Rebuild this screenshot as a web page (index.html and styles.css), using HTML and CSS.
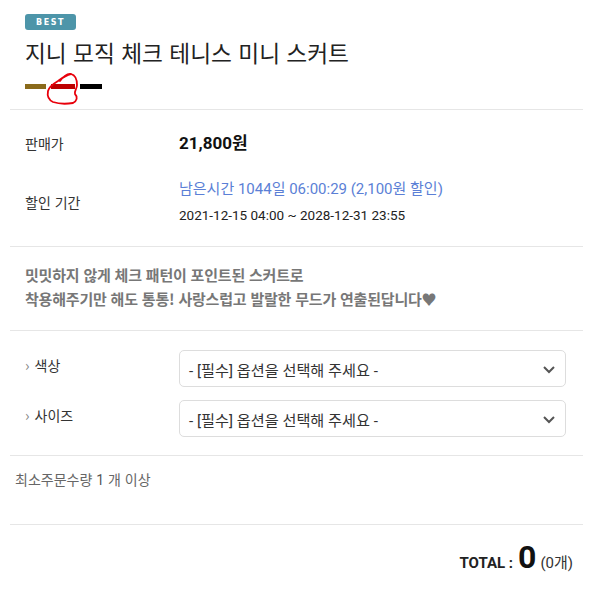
FILE: index.html
```html
<!DOCTYPE html>
<html lang="ko">
<head>
<meta charset="utf-8">
<link rel="stylesheet" href="styles.css">
</head>
<body>
<div class="page">
  <section class="head">
    <span class="badge">BEST</span>
    <h1 class="title">지니 모직 체크 테니스 미니 스커트</h1>
    <div class="swatches">
      <span class="sw gold"></span>
      <span class="sw red"></span>
      <span class="sw black"></span>
      <svg class="mark" width="50" height="44" viewBox="0 0 50 44">
        <path d="M20 13 C23 9 27 5 31 6 C35 7 37 11 37 17 C37 21 34 23 35 26 C38 29 37 33 33 35 C27 36 19 36 13 34 C9 32 7 28 8 23 C9 19 13 16 18 13 C22 10 26 7 31 6" fill="none" stroke="#e8000b" stroke-width="1.8" stroke-linecap="round"/>
      </svg>
    </div>
  </section>

  <section class="price">
    <div class="row">
      <div class="label">판매가</div>
      <div class="value strong">21,800원</div>
    </div>
    <div class="row mid">
      <div class="label">할인 기간</div>
      <div class="value">
        <div class="remain">남은시간 1044일 06:00:29 (2,100원 할인)</div>
        <div class="period">2021-12-15 04:00 ~ 2028-12-31 23:55</div>
      </div>
    </div>
  </section>

  <section class="desc">
    <p>밋밋하지 않게 체크 패턴이 포인트된 스커트로</p>
    <p>착용해주기만 해도 통통! 사랑스럽고 발랄한 무드가 연출된답니다♥</p>
  </section>

  <section class="opts">
    <div class="opt">
      <div class="olabel"><span class="gt">›</span>색상</div>
      <div class="select">
        <span>- [필수] 옵션을 선택해 주세요 -</span>
        <svg width="14" height="10" viewBox="0 0 14 10"><path d="M2 3 L7 8 L12 3" fill="none" stroke="#555" stroke-width="2"/></svg>
      </div>
    </div>
    <div class="opt">
      <div class="olabel"><span class="gt">›</span>사이즈</div>
      <div class="select">
        <span>- [필수] 옵션을 선택해 주세요 -</span>
        <svg width="14" height="10" viewBox="0 0 14 10"><path d="M2 3 L7 8 L12 3" fill="none" stroke="#555" stroke-width="2"/></svg>
      </div>
    </div>
  </section>

  <section class="minq">최소주문수량 <span class="num">1</span> 개 이상</section>

  <section class="total">
    <span class="tlabel">TOTAL :</span>
    <span class="tnum">0</span>
    <span class="tcnt">(0개)</span>
  </section>
</div>
</body>
</html>
```

FILE: styles.css
```css
* { box-sizing: border-box; }
body {
  margin: 0;
  background: #fff;
  font-family: Roboto, "Noto Sans CJK KR", sans-serif;
  color: #222;
}
.page { margin: 0 10px; }
section { border-bottom: 1px solid #e6e6e6; padding-left: 15px; }

.head { padding-top: 14px; padding-bottom: 20px; }
.badge {
  display: flex;
  align-items: center;
  justify-content: center;
  width: 51px;
  height: 16px;
  border-radius: 3px;
  background: #4d95a9;
  color: #fff;
  font-family: "DejaVu Sans", sans-serif;
  font-weight: 700;
  font-size: 8px;
  letter-spacing: 1.5px;
}
.title {
  margin: 7px 0 0;
  font-family: "Noto Sans CJK KR", sans-serif;
  font-weight: 400;
  font-size: 22.7px;
  line-height: 32px;
  color: #222;
}
.swatches {
  position: relative;
  display: flex;
  gap: 5px;
  margin-top: 15px;
  height: 5px;
}
.sw { display: block; height: 5px; }
.gold { width: 21px; background: #8a6a1b; }
.red { width: 24px; background: #bd0000; }
.black { width: 22px; background: #000; }
.mark { position: absolute; left: 15px; top: -16px; }

.price { padding-top: 21px; padding-bottom: 19px; display: flex; flex-direction: column; gap: 22px; }
.row { display: grid; grid-template-columns: 154px 1fr; align-items: center; }
.label { font-family: "Noto Sans CJK KR", sans-serif; font-size: 14px; color: #333; line-height: 24px; }
.value.strong { font-weight: 700; font-size: 17px; line-height: 24px; color: #111; }
.remain { color: #5b7fd6; font-size: 15px; line-height: 24px; }
.period { margin-top: 2px; font-size: 13.5px; line-height: 24px; color: #222; }

.desc { padding-top: 16px; padding-bottom: 19px; }
.desc p {
  margin: 0;
  font-family: "Noto Sans CJK KR", sans-serif;
  font-weight: 700;
  font-size: 15px;
  line-height: 24px;
  color: #777;
  letter-spacing: -0.2px;
}

.opts { padding-top: 19px; padding-bottom: 18px; display: flex; flex-direction: column; gap: 13px; }
.opt { display: grid; grid-template-columns: 154px 387px; align-items: start; }
.olabel {
  font-family: "Noto Sans CJK KR", sans-serif;
  font-size: 14px;
  color: #333;
  line-height: 30px;
}
.gt { color: #888; font-size: 15px; margin-right: 5px; }
.select {
  height: 37px;
  border: 1px solid #ddd;
  border-radius: 5px;
  display: flex;
  align-items: center;
  justify-content: space-between;
  padding: 0 9px 0 9px;
  font-family: Roboto, "Noto Sans CJK KR", sans-serif;
  font-size: 15.2px;
  color: #333;
}

.minq {
  padding-left: 5px;
  padding-top: 13px;
  padding-bottom: 34px;
  font-family: "Noto Sans CJK KR", sans-serif;
  font-size: 14px;
  line-height: 20px;
  color: #666;
}
.minq .num { font-family: Roboto, sans-serif; color: #555; }

.total {
  border-bottom: none;
  display: flex;
  justify-content: flex-end;
  align-items: baseline;
  padding-top: 14px;
  padding-right: 10px;
}
.tlabel { font-family: Roboto, sans-serif; font-weight: 700; font-size: 15px; color: #222; margin-right: 5px; }
.tnum { font-family: Roboto, sans-serif; font-weight: 700; font-size: 32px; color: #111; margin-right: 4px; line-height: 36px; }
.tcnt { font-family: Roboto, "Noto Sans CJK KR", sans-serif; font-size: 15px; color: #333; }
```
